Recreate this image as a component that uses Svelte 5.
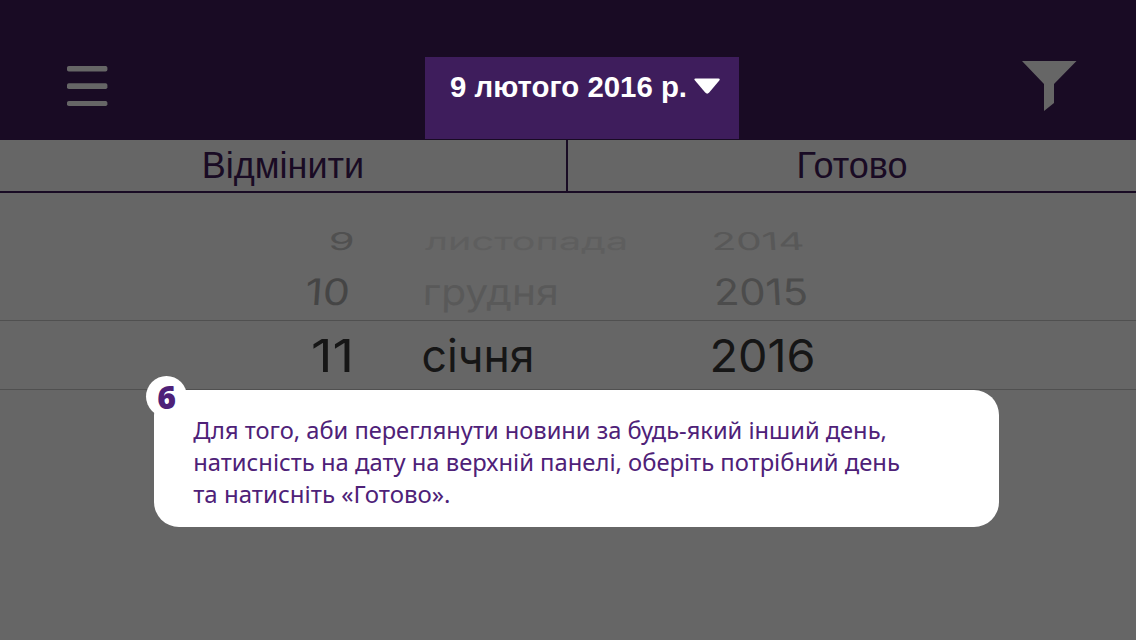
<script>
  const rows = [
    {
      height: 69, top: 193, size: 45, fade: ['#505050', '#5e5e5e', '#585858'],
      cells: [
        { t: '9', x: 328, y: 249.7, w: 26, sy: 0.54, skew: -4 },
        { t: 'листопада', x: 425, y: 249.7, w: 203, sy: 0.54, skew: -2 },
        { t: '2014', x: 712, y: 249.7, w: 93, sy: 0.54, skew: 4 }
      ]
    },
    {
      height: 58, top: 262, size: 45, fade: ['#454545', '#595959', '#4c4c4c'],
      cells: [
        { t: '10', x: 304.5, y: 304.7, w: 44.5, sy: 0.81, skew: -4 },
        { t: 'грудня', x: 422.5, y: 304.7, w: 136, sy: 0.81, skew: -1 },
        { t: '2015', x: 714.5, y: 304.7, w: 94, sy: 0.81, skew: 3 }
      ]
    },
    {
      height: 68, top: 321, size: 45.5, fade: ['#161616', '#161616', '#161616'], current: true,
      cells: [
        { t: '11', x: 311, y: 371.8, w: 43, sy: 1, skew: 0 },
        { t: 'січня', x: 421.5, y: 371.8, w: 113, sy: 1, skew: 0 },
        { t: '2016', x: 709.5, y: 371.8, w: 106, sy: 1, skew: 0 }
      ]
    }
  ];

  const tip = [
    { t: 'Для того, аби переглянути новини за будь-який інший день,', w: 694 },
    { t: 'натисність на дату на верхній панелі, оберіть потрібний день', w: 707 },
    { t: 'та натисніть «Готово».', w: 257.5 }
  ];
</script>

<main class="screen">
  <header class="topbar">
    <svg class="menu" width="41" height="41" viewBox="0 0 41 41" fill="#666">
      <rect x="0" y="0" width="40.4" height="5.6" rx="1.8" />
      <rect x="0" y="17.3" width="40.4" height="5.8" rx="1.8" />
      <rect x="0" y="35" width="40.4" height="5" rx="1.8" />
    </svg>
    <button class="date">
      <svg width="314" height="82" viewBox="0 0 314 82">
        <text x="25" y="40" textLength="237" lengthAdjust="spacingAndGlyphs">9 лютого 2016 р.</text>
        <path d="M270.5 21.500H293.500Q295.500 21.500 294.300 23.500L284.200 35.500Q282.200 37.800 280.200 35.500L270 23.500Q268.500 21.500 270.500 21.500Z" />
      </svg>
    </button>
    <svg class="filter" width="56" height="52" viewBox="0 0 56 52" fill="#666">
      <path d="M0 0H54.500L32 23V42L22 50V23Z" />
    </svg>
  </header>

  <nav class="actions">
    <button class="action"><span>Відмінити</span></button>
    <button class="action done"><span>Готово</span></button>
  </nav>

  <section class="picker">
    {#each rows as row}
      <svg class="row" class:current={row.current} width="1136" height={row.height} viewBox="0 {row.top} 1136 {row.height}">
        {#each row.cells as c, i}
          <text
            transform="translate({c.x} {c.y}) skewX({c.skew}) scale(1 {c.sy})"
            font-size={row.size}
            fill={row.fade[i]}
            textLength={c.w}
            lengthAdjust="spacingAndGlyphs">{c.t}</text>
        {/each}
      </svg>
    {/each}
  </section>

  <aside class="tip">
    <span class="badge">6</span>
    {#each tip as line}
      <svg class="line" width="770" height="32.2" viewBox="0 0 770 32.2">
        <text x="0" y="24" textLength={line.w} lengthAdjust="spacingAndGlyphs">{line.t}</text>
      </svg>
    {/each}
  </aside>
</main>

<style>
  :global(body) {
    margin: 0;
    background: #666;
  }
  .screen {
    position: relative;
    display: flex;
    flex-direction: column;
    width: 1136px;
    height: 640px;
    overflow: hidden;
    background: #666;
  }
  svg {
    display: block;
    overflow: visible;
  }
  button {
    margin: 0;
    padding: 0;
    border: 0;
    background: none;
  }
  .topbar {
    display: flex;
    align-items: flex-start;
    box-sizing: border-box;
    height: 140px;
    padding: 57px 59px 0 67px;
    background: #190b24;
  }
  .menu {
    margin-top: 9px;
  }
  .date {
    width: 314px;
    height: 82px;
    margin-left: 317px;
    background: #3e1d5c;
  }
  .date svg {
    fill: #fff;
    font: bold 29.5px 'Liberation Sans', Arial, sans-serif;
  }
  .filter {
    margin: 4px 0 0 283px;
  }
  .actions {
    display: grid;
    grid-template-columns: 566px 1fr;
    height: 51px;
    border-bottom: 2px solid #190b24;
  }
  .action {
    color: #190b24;
    font: 36px/51px 'Liberation Sans', Arial, sans-serif;
  }
  .done {
    border-left: 2px solid #190b24;
  }
  .picker {
    display: flex;
    flex-direction: column;
    font-family: Inter, sans-serif;
  }
  .current {
    border-top: 1px solid #505050;
    border-bottom: 1px solid #505050;
  }
  .tip {
    position: absolute;
    left: 153.5px;
    top: 389.5px;
    box-sizing: border-box;
    width: 845.5px;
    height: 137.5px;
    padding: 25px 36px 0 39px;
    border-radius: 25px;
    background: #fff;
  }
  .line {
    fill: #4e2178;
    font: 24px 'Noto Sans', sans-serif;
  }
  .badge {
    position: absolute;
    left: -7.5px;
    top: -13.5px;
    width: 41px;
    height: 41px;
    border-radius: 50%;
    background: #fff;
    color: #4e2178;
    font: 800 32px/42px 'Open Sans', 'Noto Sans', sans-serif;
    text-align: center;
  }
</style>
